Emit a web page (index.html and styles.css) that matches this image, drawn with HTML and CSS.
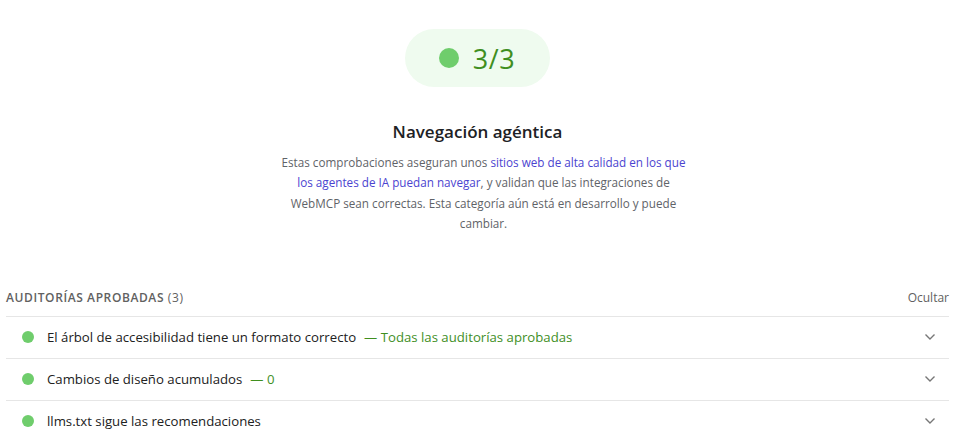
FILE: index.html
```html
<!DOCTYPE html>
<html lang="es">
<head>
    <meta charset="UTF-8">
    <meta name="viewport" content="width=device-width, initial-scale=1.0">
    <title>Navegación agéntica</title>
    <link rel="stylesheet" href="styles.css">
</head>
<body>
    <div class="report">
        <div class="category-header">
            <div class="score-pill">
                <span class="score-dot"></span>
                <span class="score-value">3/3</span>
            </div>
            <h2 class="category-title">Navegación agéntica</h2>
            <p class="category-desc">
                Estas comprobaciones aseguran unos <a href="#">sitios web de alta calidad en los que los agentes de IA puedan navegar</a>, y validan que las integraciones de WebMCP sean correctas. Esta categoría aún está en desarrollo y puede cambiar.
            </p>
        </div>

        <div class="audit-group">
            <div class="group-header">
                <span class="group-title">Auditorías aprobadas <span class="group-count">(3)</span></span>
                <span class="group-toggle">Ocultar</span>
            </div>

            <div class="audit">
                <span class="audit-dot"></span>
                <span class="audit-name">El árbol de accesibilidad tiene un formato correcto</span>
                <span class="audit-value">— Todas las auditorías aprobadas</span>
                <svg class="chevron" viewBox="0 0 12 8"><path d="M1.5 1.5 6 6l4.5-4.5"/></svg>
            </div>
            <div class="audit">
                <span class="audit-dot"></span>
                <span class="audit-name">Cambios de diseño acumulados</span>
                <span class="audit-value">— 0</span>
                <svg class="chevron" viewBox="0 0 12 8"><path d="M1.5 1.5 6 6l4.5-4.5"/></svg>
            </div>
            <div class="audit">
                <span class="audit-dot"></span>
                <span class="audit-name">llms.txt sigue las recomendaciones</span>
                <svg class="chevron" viewBox="0 0 12 8"><path d="M1.5 1.5 6 6l4.5-4.5"/></svg>
            </div>
        </div>
    </div>
</body>
</html>
```

FILE: styles.css
```css
body {
    margin: 0;
    font-family: "Open Sans", "Noto Sans", sans-serif;
    color: #212121;
    background: #fff;
}

.report {
    padding: 29px 9px 0 6px;
}

/* cabecera de la categoría */
.category-header {
    display: flex;
    flex-direction: column;
    align-items: center;
}

.score-pill {
    display: flex;
    align-items: center;
    gap: 14px;
    height: 58px;
    padding: 0 35px 0 34px;
    border-radius: 29px;
    background: #effbef;
}

.score-dot {
    width: 20px;
    height: 20px;
    border-radius: 50%;
    background: #6fcd6c;
}

.score-value {
    font-size: 27px;
    color: #3f8f1f;
    letter-spacing: 0.5px;
}

.category-title {
    margin: 33px 0 0;
    font-size: 17px;
    font-weight: 600;
    color: #202124;
}

.category-desc {
    margin: 9px 0 0 12px;
    width: 412px;
    font-size: 11.7px;
    line-height: 20.4px;
    text-align: center;
    color: #5f6368;
}

.category-desc a {
    color: #4b44d0;
    text-decoration: none;
}

/* grupo de auditorías */
.audit-group {
    margin-top: 50px;
}

.group-header {
    display: flex;
    justify-content: space-between;
    align-items: center;
    height: 28px;
    border-bottom: 1px solid #e6e6e6;
    padding-bottom: 4px;
}

.group-title {
    font-size: 12px;
    font-weight: 600;
    text-transform: uppercase;
    letter-spacing: 0.6px;
    color: #616161;
}

.group-count {
    font-weight: 400;
}

.group-toggle {
    font-size: 12px;
    color: #616161;
}

.audit {
    display: flex;
    align-items: center;
    height: 41px;
    padding: 0 13px 0 16px;
    border-bottom: 1px solid #e6e6e6;
    font-size: 13.2px;
}

.audit:last-child {
    border-bottom: none;
}

.audit-dot {
    width: 12px;
    height: 12px;
    border-radius: 50%;
    background: #6fcd6c;
    margin-right: 13px;
}

.audit-value {
    margin-left: 8px;
    color: #3f8f1f;
}

.chevron {
    margin-left: auto;
    width: 12px;
    height: 8px;
    fill: none;
    stroke: #777;
    stroke-width: 1.4;
}
```
